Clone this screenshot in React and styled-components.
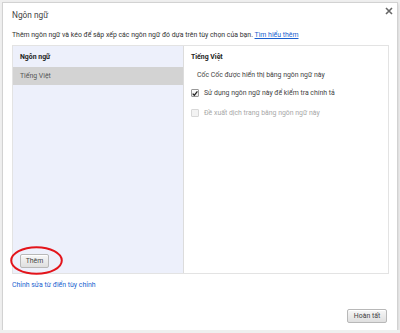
import styled, { createGlobalStyle } from "styled-components";

const Global = createGlobalStyle`
  html, body {
    margin: 0;
    padding: 0;
    background: #efefef;
  }
  body {
    font-family: Roboto, "Noto Sans", sans-serif;
    font-size: 6.9px;
    color: #333;
  }
`;

const Dialog = styled.div`
  box-sizing: border-box;
  margin: 3px 0 0 3px;
  width: 394px;
  height: 327px;
  background: #fff;
  box-shadow: 0 0 0 1px #d2d2d2, 1px 1px 3px rgba(0, 0, 0, 0.18);
  display: flex;
  flex-direction: column;
  padding: 0 0 0 9px;
`;

const Header = styled.div`
  display: flex;
  justify-content: space-between;
  align-items: flex-start;
  height: 25px;
  padding-right: 4px;
`;

const Title = styled.h1`
  margin: 7px 0 0 0;
  font-size: 8.3px;
  font-weight: normal;
  color: #444;
`;

const Close = styled.button`
  border: none;
  background: none;
  padding: 0;
  margin: 4px 0 0 0;
  width: 8px;
  height: 8px;
  display: flex;
  cursor: pointer;
`;

const Desc = styled.p`
  margin: 1px 0 0 0;
  line-height: 13px;
  color: #333;
  white-space: nowrap;
`;

const Link = styled.a`
  color: #1a5fcf;
  text-decoration: ${(p) => (p.$underline ? "underline" : "none")};
  cursor: pointer;
`;

const Panel = styled.div`
  margin-top: 3px;
  width: 377px;
  height: 229px;
  box-sizing: border-box;
  border: 1px solid #e3e3e3;
  display: grid;
  grid-template-columns: 171px 1fr;
`;

const LeftCol = styled.div`
  position: relative;
  background: #edf0fb;
  border-right: 1px solid #dcdcdc;
  display: flex;
  flex-direction: column;
`;

const ColHead = styled.div`
  height: 21px;
  padding: 0 7px;
  display: flex;
  align-items: center;
  font-weight: bold;
  color: #222;
`;

const LangRow = styled.div`
  height: 18px;
  padding: 0 7px;
  display: flex;
  align-items: center;
  color: #555;
  background: ${(p) => (p.$selected ? "#d3d3d3" : "transparent")};
`;

const LeftFoot = styled.div`
  margin-top: auto;
  padding: 0 0 5px 7px;
`;

const Btn = styled.button`
  font-family: Roboto, "Noto Sans", sans-serif;
  font-size: 6.9px;
  color: #444;
  height: 14px;
  width: ${(p) => p.$w}px;
  padding: 0;
  border: 1px solid #b8b8b8;
  border-radius: 2px;
  background: linear-gradient(#f7f7f7, #dfdfdf);
  box-shadow: inset 0 1px 0 #fff;
  display: flex;
  align-items: center;
  justify-content: center;
  cursor: pointer;
`;

const Ring = styled.svg`
  position: absolute;
  left: -3px;
  bottom: -2px;
  width: 53px;
  height: 29px;
  pointer-events: none;
`;

const RightCol = styled.div`
  padding: 0 7px;
  display: flex;
  flex-direction: column;
`;

const RightHead = styled.div`
  height: 21px;
  display: flex;
  align-items: center;
  font-weight: bold;
  color: #222;
`;

const Info = styled.div`
  color: #444;
  padding-left: 6px;
  height: 16px;
  display: flex;
  align-items: center;
`;

const Option = styled.label`
  display: flex;
  align-items: center;
  gap: 5px;
  height: 20px;
  color: ${(p) => (p.$disabled ? "#a8a8a8" : "#444")};
`;

const Box = styled.span`
  box-sizing: border-box;
  width: 8px;
  height: 8px;
  border: 1px solid ${(p) => (p.$disabled ? "#d8d8d8" : "#999")};
  border-radius: 1px;
  background: ${(p) => (p.$disabled ? "#f3f3f3" : "linear-gradient(#fff, #e6e6e6)")};
  display: flex;
  align-items: center;
  justify-content: center;
`;

const BottomLink = styled.div`
  margin-top: 5px;
  line-height: 12px;
`;

const Footer = styled.div`
  margin-top: auto;
  display: flex;
  justify-content: flex-end;
  padding: 0 10px 7px 0;
`;

export default function App() {
  return (
    <>
      <Global />
      <Dialog>
        <Header>
          <Title>Ngôn ngữ</Title>
          <Close aria-label="close">
            <svg width="8" height="8" viewBox="0 0 8 8">
              <path d="M1 1L7 7M7 1L1 7" stroke="#666" strokeWidth="1.6" />
            </svg>
          </Close>
        </Header>
        <Desc>
          Thêm ngôn ngữ và kéo để sắp xếp các ngôn ngữ đó dựa trên tùy chọn của bạn.{" "}
          <Link $underline>Tìm hiểu thêm</Link>
        </Desc>
        <Panel>
          <LeftCol>
            <ColHead>Ngôn ngữ</ColHead>
            <LangRow $selected>Tiếng Việt</LangRow>
            <LeftFoot>
              <Btn $w={29}>Thêm</Btn>
            </LeftFoot>
            <Ring viewBox="0 0 53 29">
              <ellipse cx="26.5" cy="14.5" rx="25.3" ry="13.3" fill="none" stroke="#e3141b" strokeWidth="2" />
            </Ring>
          </LeftCol>
          <RightCol>
            <RightHead>Tiếng Việt</RightHead>
            <Info>Cốc Cốc được hiển thị bằng ngôn ngữ này</Info>
            <Option>
              <Box>
                <svg width="7" height="7" viewBox="0 0 7 7">
                  <path d="M0.8 3.6L2.7 5.6L6.3 0.9" fill="none" stroke="#222" strokeWidth="1.5" />
                </svg>
              </Box>
              Sử dụng ngôn ngữ này để kiểm tra chính tả
            </Option>
            <Option $disabled>
              <Box $disabled />
              Đề xuất dịch trang bằng ngôn ngữ này
            </Option>
          </RightCol>
        </Panel>
        <BottomLink>
          <Link>Chỉnh sửa từ điển tùy chỉnh</Link>
        </BottomLink>
        <Footer>
          <Btn $w={40}>Hoàn tất</Btn>
        </Footer>
      </Dialog>
    </>
  );
}
